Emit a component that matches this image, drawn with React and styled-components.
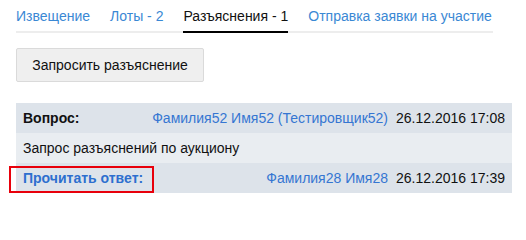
import React from "react";
import styled, { createGlobalStyle } from "styled-components";

const Global = createGlobalStyle`
  html, body { margin: 0; padding: 0; background: #fff; }
  body { font-family: "Liberation Sans", Arial, sans-serif; font-size: 14px; color: #111; }
`;

const Page = styled.div`
  padding: 8px 14px 0 16px;
  width: 496px;
`;

const Tabs = styled.div`
  display: flex;
  gap: 20px;
  width: 477px;
  border-bottom: 2px solid #ededed;
`;

const Tab = styled.a`
  display: block;
  padding: 0 0 7px;
  margin-bottom: -2px;
  font-size: 14px;
  line-height: 16px;
  color: ${(p) => (p.$active ? "#111" : "#3a88d4")};
  border-bottom: 2px solid ${(p) => (p.$active ? "#000" : "transparent")};
  text-decoration: none;
  cursor: pointer;
`;

const Button = styled.button`
  margin-top: 15px;
  width: 188px;
  height: 34px;
  font-family: inherit;
  font-size: 14px;
  color: #111;
  background: #efefef;
  border: 1px solid #dadada;
  border-radius: 2px;
  padding: 0;
`;

const Table = styled.div`
  margin-top: 21px;
  width: 496px;
`;

const Row = styled.div`
  position: relative;
  display: flex;
  align-items: center;
  height: 30px;
  padding: 0 7px;
  box-sizing: border-box;
  font-size: 14px;
  background: ${(p) => (p.$alt ? "#e9edf1" : "#dde3ea")};
`;

const Label = styled.span`
  font-weight: bold;
  color: ${(p) => (p.$link ? "#2d6fcf" : "#111")};
  flex: 1;
`;

const Name = styled.span`
  color: #3576d2;
`;

const Date = styled.span`
  margin-left: 8px;
  color: #111;
`;

const Highlight = styled.div`
  position: absolute;
  left: -7px;
  top: 3px;
  width: 141px;
  height: 23px;
  border: 2px solid #e8000b;
`;

export default function App() {
  return (
    <>
      <Global />
      <Page>
        <Tabs>
          <Tab>Извещение</Tab>
          <Tab>Лоты - 2</Tab>
          <Tab $active>Разъяснения - 1</Tab>
          <Tab>Отправка заявки на участие</Tab>
        </Tabs>
        <Button>Запросить разъяснение</Button>
        <Table>
          <Row>
            <Label>Вопрос:</Label>
            <Name>Фамилия52 Имя52 (Тестировщик52)</Name>
            <Date>26.12.2016 17:08</Date>
          </Row>
          <Row $alt>Запрос разъяснений по аукциону</Row>
          <Row>
            <Label $link>Прочитать ответ:</Label>
            <Name>Фамилия28 Имя28</Name>
            <Date>26.12.2016 17:39</Date>
            <Highlight />
          </Row>
        </Table>
      </Page>
    </>
  );
}
